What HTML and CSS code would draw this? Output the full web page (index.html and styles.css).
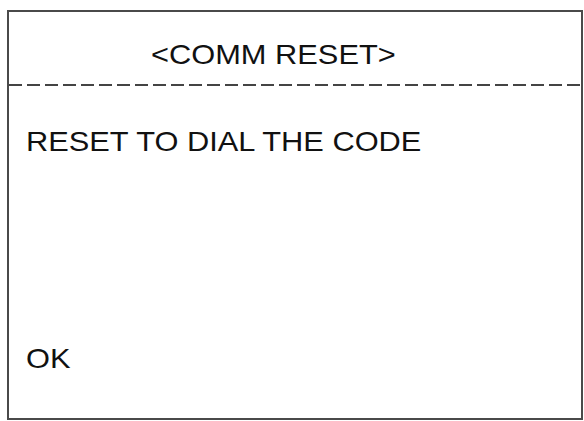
FILE: index.html
```html
<!DOCTYPE html>
<html lang="en">
<head>
    <meta charset="UTF-8">
    <meta name="viewport" content="width=device-width, initial-scale=1.0">
    <title>Comm Reset</title>
    <link rel="stylesheet" href="styles.css">
</head>
<body>
    <div class="screen">
        <div class="screen-title">&lt;COMM RESET&gt;</div>
        <div class="divider"></div>
        <p class="message">RESET TO DIAL THE CODE</p>
        <p class="message confirm">OK</p>
    </div>
</body>
</html>
```

FILE: styles.css
```css
* {
    margin: 0;
    padding: 0;
    box-sizing: border-box;
}

body {
    font-family: "Liberation Sans", Arial, sans-serif;
    background: #fff;
    color: #111;
    padding: 10px 1px 1px 7px;
}

.screen {
    width: 576px;
    height: 410px;
    border: 2px solid #4a4a4a;
    display: flex;
    flex-direction: column;
    padding-bottom: 42px;
}

/* the LCD font is a little wider than Arial */
.screen-title,
.message {
    align-self: flex-start;
    font-size: 28px;
    line-height: 34px;
    transform: scaleX(1.1);
    transform-origin: left center;
    white-space: nowrap;
}

.screen-title {
    margin-top: 26px;
    margin-left: 142px;
}

/* dashed rule under the title */
.divider {
    height: 2px;
    margin-top: 12px;
    margin-right: -2px;
    background: repeating-linear-gradient(
        to right,
        #444 0 13px,
        transparent 13px 18px
    );
}

.message {
    margin-top: 39px;
    margin-left: 17px;
}

.confirm {
    margin-top: auto;
}
```
